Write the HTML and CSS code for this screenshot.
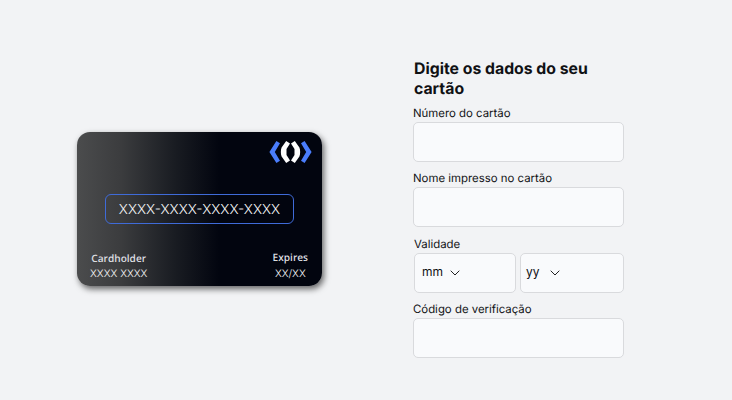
FILE: index.html
```html
<!DOCTYPE html>
<html lang="pt-BR">
<head>
<meta charset="utf-8">
<title>Dados do cartão</title>
<link rel="stylesheet" href="styles.css">
</head>
<body>
<main class="page">
  <section class="card">
    <svg class="logo" width="44" height="24" viewBox="0 0 44 24">
      <path d="M8.4.9 12 3.2 6.8 12l5.2 8.8-3.6 2.2L1.4 12z" fill="#4a7dfb"/>
      <path d="M18.2 1 22 3.5 18.5 9v6l3.5 5.5-3.8 2.5-4.6-6.5c-1-2.5-1-6.500 0-9z" fill="#fff"/>
      <path d="M26.8 1 23 3.5 26.5 9v6L23 20.500l3.800 2.500 4.600-6.500c1-2.500 1-6.500 0-9z" fill="#fff"/>
      <path d="M36.600.9 33 3.200l5.200 8.800-5.200 8.800 3.600 2.200 7-11z" fill="#4a7dfb"/>
    </svg>
    <div class="number"><span>XXXX-XXXX-XXXX-XXXX</span></div>
    <div class="details">
      <div class="holder"><strong>Cardholder</strong><span>XXXX XXXX</span></div>
      <div class="expires"><strong>Expires</strong><span>XX/XX</span></div>
    </div>
  </section>
  <form class="form">
    <h1>Digite os dados do seu cartão</h1>
    <label class="l-number" for="number">Número do cartão</label>
    <input id="number" type="text">
    <label class="l-name" for="name">Nome impresso no cartão</label>
    <input id="name" type="text">
    <label class="l-valid">Validade</label>
    <div class="selects">
      <button type="button" class="month"><span>mm</span><svg width="10" height="6" viewBox="0 0 10 6"><path d="M.7.7 5 5 9.3.7"/></svg></button>
      <button type="button" class="year"><span>yy</span><svg width="10" height="6" viewBox="0 0 10 6"><path d="M.7.7 5 5 9.3.7"/></svg></button>
    </div>
    <label class="l-code" for="code">Código de verificação</label>
    <input id="code" type="text">
  </form>
</main>
</body>
</html>
```
FILE: styles.css
```css
* { box-sizing: border-box; }
body {
  margin: 0;
  background: #f2f3f5;
  color: #101114;
  font-family: Inter, sans-serif;
  text-rendering: geometricPrecision;
}
.page {
  display: flex;
  align-items: flex-start;
  width: 732px;
  height: 400px;
  overflow: hidden;
}
.card {
  display: flex;
  flex-direction: column;
  width: 245px;
  height: 154px;
  margin: 132px 0 0 77px;
  border-radius: 13px;
  background: linear-gradient(90deg, #4b4c4d 0%, #3b3c3e 18%, #191c22 40%, #02050f 58%);
  box-shadow: 2px 3px 6px rgba(0, 0, 0, .6);
  color: #f4f4f6;
}
.logo {
  align-self: flex-end;
  margin: 8px 10px 0 0;
}
.number {
  display: flex;
  align-items: center;
  justify-content: center;
  width: 189px;
  height: 30px;
  margin: 30px 0 0 28px;
  padding-top: 1px;
  border: 1px solid #3f6bd8;
  border-radius: 6px;
  font-size: 13.75px;
  font-weight: 300;
  white-space: nowrap;
}
.details {
  display: flex;
  justify-content: space-between;
  margin-top: 26px;
  padding: 0 14px 0 13px;
}
.details div {
  display: flex;
  flex-direction: column;
  align-items: center;
  line-height: 16px;
}
.details strong { font-family: "Open Sans", sans-serif; font-size: 10.1px; font-weight: 600; color: #dedfe1; }
.details span { font-size: 10.3px; font-weight: 300; }
.expires strong { margin: -1px 0 1px; }
.form {
  display: flex;
  flex-direction: column;
  width: 211px;
  margin: 59px 0 0 91px;
}
h1 {
  margin: 0 0 0 1px;
  font-size: 15.8px;
  font-weight: 700;
  line-height: 19.5px;
}
label {
  height: 17px;
  font-size: 11.4px;
  font-weight: 440;
  line-height: 16px;
  white-space: nowrap;
}
.l-number { margin-top: 7px; }
.l-name { margin-top: 8px; }
.l-valid { margin: 9px 0 0 1px; }
.l-code { margin-top: 8px; }
input, button {
  height: 40px;
  border: 1px solid #d9dadd;
  border-radius: 5px;
  background: #f9fafc;
  color: inherit;
  font: 12px Inter, sans-serif;
}
input { width: 211px; padding: 0 9px; }
.selects { display: flex; gap: 4px; margin-left: 1px; }
button {
  display: flex;
  align-items: center;
  padding: 0 0 3px 7px;
}
.month { width: 102px; gap: 7px; }
.year { width: 104px; gap: 10px; padding-left: 5px; }
button svg { margin-top: 3px; fill: none; stroke: #222; }
```
